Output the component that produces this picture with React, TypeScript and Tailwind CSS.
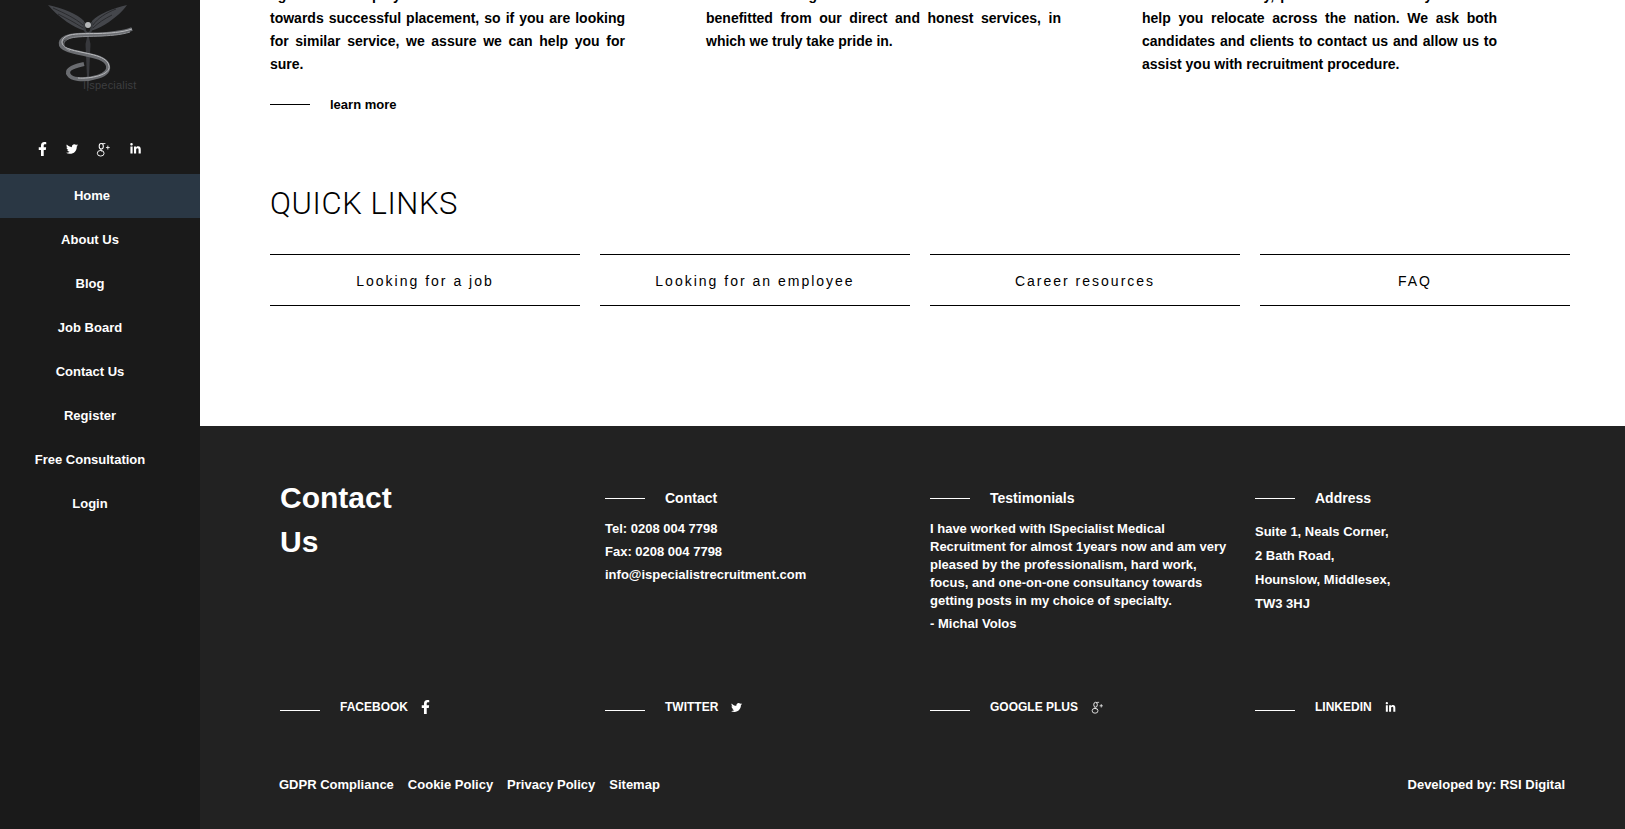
import { FaFacebookF, FaTwitter, FaLinkedinIn } from "react-icons/fa"

const sans = "font-['Liberation_Sans',Arial,sans-serif]"

const navItems = ["Home", "About Us", "Blog", "Job Board", "Contact Us", "Register", "Free Consultation", "Login"]

// old style serif g+ mark, the packages only carry the newer one
function GooglePlusOld({ className }: { className: string }) {
  return (
    <svg viewBox="0 0 16 16" className={className} fill="none" stroke="currentColor">
      <ellipse cx="5.6" cy="4.6" rx="2.2" ry="3" strokeWidth="1.1" />
      <ellipse cx="5" cy="12" rx="3.6" ry="3" strokeWidth="1" />
      <path d="M5 7.7 C3.6 8.8 5.6 9.2 6.6 10 M6.5 1.8 L10 1.6" strokeWidth="0.9" />
      <path d="M12.6 3.8 V8 M10.6 5.9 H14.6" strokeWidth="0.9" />
    </svg>
  )
}

function Logo() {
  return (
    <div className="relative h-[100px] w-[130px]">
      <svg viewBox="0 0 130 100" className="absolute inset-0 h-full w-full" fill="none">
        {/* wings */}
        <path d="M28 5 C42 8 58 14 64 21 L66 31 C58 29 52 25 47 22 C40 17 33 11 28 5 Z" fill="#44464b" />
        <path d="M107 5 C94 8 78 14 72 21 L70 31 C78 29 84 25 89 22 C96 17 103 11 107 5 Z" fill="#44464b" />
        <path d="M33 8 C44 13 55 18 63 25 M38 14 C46 18 54 22 63 28 M96 9 C86 13 78 18 73 25 M92 15 C84 19 78 23 73 28" stroke="#2a2b2e" strokeWidth="1" />
        <circle cx="68" cy="25" r="3" fill="#b5b7b9" />
        <path d="M64 22 C63 30 66 33 68 33 C70 33 73 30 72 22" stroke="#3a3c40" strokeWidth="2" />
        {/* staff */}
        <path d="M68 33 L70.5 44 L68.5 88 L67.5 88 L65.5 44 Z" fill="#38393d" />
        {/* ribbon */}
        <path d="M112 29 C92 37 62 33 50 36 C38 39 38 47 48 50 C62 55 86 55 88 66 C90 76 70 80 58 79 C48 78 46 72 50 69 C54 66 60 65 64 64" stroke="#6a6c70" strokeWidth="4" />
        <path d="M112 29 C92 36 62 32 50 35 C39 38 40 46 49 49 C63 54 87 54 89 66 C91 75 70 79 58 78" stroke="#b9babd" strokeWidth="1" />
        <path d="M110 32 C92 38 62 35 51 38 C41 41 42 47 50 51" stroke="#8f9195" strokeWidth="1" />
      </svg>
      <span className="absolute left-[63px] top-[78px] text-[11px] leading-[14px] tracking-[0.2px] text-[#3d3e40]">I|specialist</span>
    </div>
  )
}

function Sidebar() {
  return (
    <aside className="flex h-[829px] w-[200px] shrink-0 flex-col bg-[#1a1a1a] text-white">
      <div className="ml-[20px] h-[100px]">
        <Logo />
      </div>
      <div className="mt-[41px] flex h-[16px] items-center text-white">
        <FaFacebookF className="ml-[36px] h-[14px] w-[13px]" />
        <FaTwitter className="ml-[17px] h-[12px] w-[12px]" />
        <GooglePlusOld className="ml-[18px] h-[15px] w-[15px]" />
        <FaLinkedinIn className="ml-[18px] h-[12px] w-[13px]" />
      </div>
      <nav className="mt-[17px] flex flex-col">
        {navItems.map((item, i) => (
          <a
            key={item}
            className={
              i === 0
                ? "flex h-[44px] items-center justify-center bg-[#2a3744] pr-[16px] text-[13px] font-bold"
                : "flex h-[44px] items-center justify-center pr-[20px] text-[13px] font-bold"
            }
          >
            {item}
          </a>
        ))}
      </nav>
    </aside>
  )
}

function Quick({ label }: { label: string }) {
  return (
    <a className="flex h-[52px] items-center justify-center border-y border-black pt-[3px] text-[14px] tracking-[2px] text-black">
      {label}
    </a>
  )
}

// the lines break where the source breaks them, each one justified except the last
function Blurb({ lines }: { lines: string[] }) {
  return (
    <div className="text-[14px] font-bold leading-[23px] text-black">
      {lines.map((line, i) => (
        <div key={line} className={i === lines.length - 1 ? "" : "[text-align-last:justify]"}>
          {line}
        </div>
      ))}
    </div>
  )
}

function Heading({ label }: { label: string }) {
  return (
    <div className="flex items-center">
      <span className="h-px w-[40px] bg-white" />
      <span className="ml-[20px] text-[14px] font-bold">{label}</span>
    </div>
  )
}

function Social({ label, children }: { label: string; children: React.ReactNode }) {
  return (
    <div className="flex items-center">
      <span className="mt-[7px] h-px w-[40px] bg-white" />
      <span className="ml-[20px] text-[12px] font-bold">{label}</span>
      <span className="ml-[13px]">{children}</span>
    </div>
  )
}

function Footer() {
  return (
    <footer className="h-[403px] bg-[#222222] pl-[80px] pr-[60px] pt-[49px] text-white">
      <div className="grid h-[206px] grid-cols-[325px_325px_325px_1fr]">
        <h2 className="pt-[1px] text-[30px] font-bold leading-[44px]">
          Contact
          <br />
          Us
        </h2>
        <div className="pt-[13px]">
          <Heading label="Contact" />
          <div className="mt-[8px] text-[13px] font-bold leading-[23px]">
            <div>Tel: 0208 004 7798</div>
            <div>Fax: 0208 004 7798</div>
            <div>info@ispecialistrecruitment.com</div>
          </div>
        </div>
        <div className="pt-[13px]">
          <Heading label="Testimonials" />
          <p className="mt-[11px] w-[300px] text-[13px] font-bold leading-[18px]">
            I have worked with ISpecialist Medical Recruitment for almost 1years now and am very pleased by the
            professionalism, hard work, focus, and one-on-one consultancy towards getting posts in my choice of specialty.
          </p>
          <p className="mt-[5px] text-[13px] font-bold leading-[18px]">- Michal Volos</p>
        </div>
        <div className="pt-[13px]">
          <Heading label="Address" />
          <div className="mt-[11px] text-[13px] font-bold leading-[24px]">
            <div>Suite 1, Neals Corner,</div>
            <div>2 Bath Road,</div>
            <div>Hounslow, Middlesex,</div>
            <div>TW3 3HJ</div>
          </div>
        </div>
      </div>
      <div className="mt-[16px] grid h-[20px] grid-cols-[325px_325px_325px_1fr]">
        <Social label="FACEBOOK"><FaFacebookF className="-ml-[2px] h-[14px] w-[13px]" /></Social>
        <Social label="TWITTER"><FaTwitter className="h-[11px] w-[11px]" /></Social>
        <Social label="GOOGLE PLUS"><GooglePlusOld className="h-[13px] w-[13px]" /></Social>
        <Social label="LINKEDIN"><FaLinkedinIn className="h-[11px] w-[11px]" /></Social>
      </div>
      <div className="mt-[58px] -ml-px flex items-center justify-between text-[13px] font-bold">
        <div className="flex gap-[14px]">
          <a>GDPR Compliance</a>
          <a>Cookie Policy</a>
          <a>Privacy Policy</a>
          <a>Sitemap</a>
        </div>
        <span>Developed by: RSI Digital</span>
      </div>
    </footer>
  )
}

export default function App() {
  return (
    <div className={`flex h-[829px] w-[1625px] overflow-hidden bg-white ${sans}`}>
      <Sidebar />
      <main className="min-w-0 flex-1">
        <div className="h-[426px] overflow-hidden pl-[70px] pr-[55px]">
          <div className="-mt-[16px] grid grid-cols-3 gap-x-[81px] pr-[73px]">
            <div>
              <Blurb
                lines={[
                  "agents and employers. We are committed and work",
                  "towards successful placement, so if you are looking",
                  "for similar service, we assure we can help you for",
                  "sure.",
                ]}
              />
              <div className="mt-[19px] flex items-center">
                <span className="h-px w-[40px] bg-black" />
                <span className="ml-[20px] text-[13px] font-bold text-black">learn more</span>
              </div>
            </div>
            <Blurb
              lines={[
                "clients and large firms who have worked with us",
                "benefitted from our direct and honest services, in",
                "which we truly take pride in.",
              ]}
            />
            <Blurb
              lines={[
                "across the country, provide the necessary and also",
                "help you relocate across the nation. We ask both",
                "candidates and clients to contact us and allow us to",
                "assist you with recruitment procedure.",
              ]}
            />
          </div>
          <h2 className="mt-[71px] font-['Roboto',sans-serif] text-[31px] font-light leading-[36px] tracking-[0.6px] text-black">QUICK LINKS</h2>
          <div className="mt-[32px] grid grid-cols-4 gap-x-[20px]">
            <Quick label="Looking for a job" />
            <Quick label="Looking for an employee" />
            <Quick label="Career resources" />
            <Quick label="FAQ" />
          </div>
        </div>
        <Footer />
      </main>
    </div>
  )
}
